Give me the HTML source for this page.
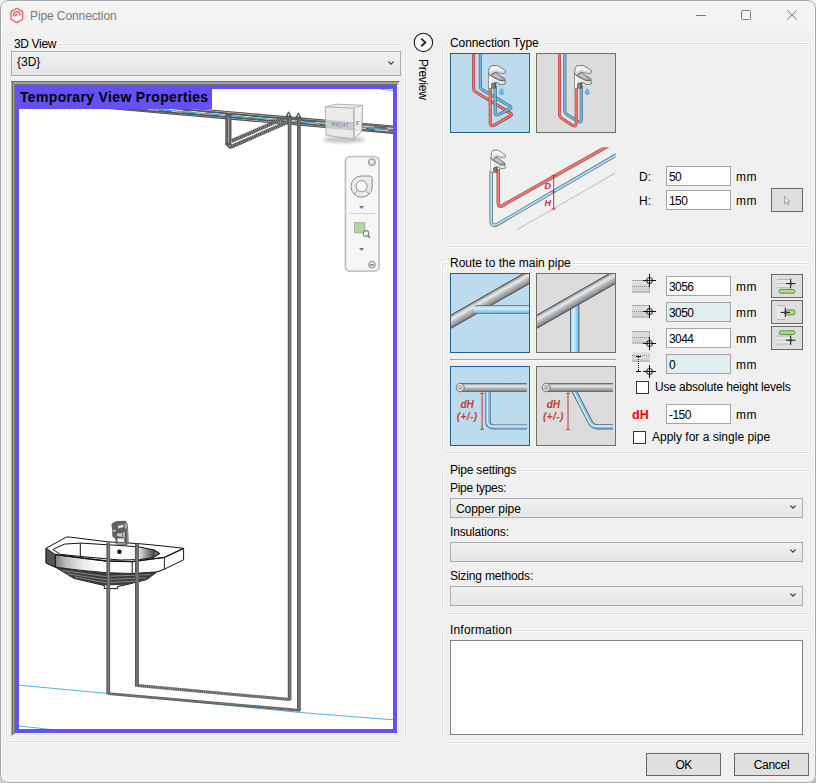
<!DOCTYPE html>
<html lang="en">
<head>
<meta charset="utf-8">
<title>Pipe Connection</title>
<style>
html,body{margin:0;padding:0;}
body{width:816px;height:783px;overflow:hidden;background:#f0f0f0;font-family:"Liberation Sans",sans-serif;font-size:12px;line-height:14px;color:#000;}
#win{position:absolute;left:0;top:0;width:816px;height:783px;border-radius:8px;background:#f0f0f0;overflow:hidden;}
#frame{position:absolute;left:0;top:0;width:814px;height:781px;border:1px solid #a8a8a8;border-radius:8px;pointer-events:none;box-shadow:inset 0 0 0 1px rgba(255,255,255,0.45);}
#tbar{position:absolute;left:0;top:0;width:816px;height:31px;background:#f3f3f3;}
.abs{position:absolute;}
.t{position:absolute;white-space:nowrap;line-height:14px;height:14px;}
.grp{position:absolute;box-sizing:border-box;border:1px solid #d3dde4;border-radius:4px;box-shadow:0 0 0 1px #fcfcfc, inset 0 0 0 1px #fcfcfc;}
.glab{position:absolute;white-space:nowrap;line-height:14px;height:14px;background:#f0f0f0;padding:0 2px 0 2px;}
.glab.r{padding-left:2px;}
.combo{position:absolute;box-sizing:border-box;border:1px solid #acacac;background:linear-gradient(#f1f1f1,#e5e5e5);}
.combo svg{position:absolute;right:6px;top:50%;margin-top:-3px;}
.inp{position:absolute;box-sizing:border-box;width:65px;height:20px;border:1px solid #a4a4ac;background:#fff;}
.inp.ro{background:#e1eef0;}
.inp span{position:absolute;left:2px;top:2.5px;line-height:14px;white-space:nowrap;letter-spacing:-0.55px;}
.btn{position:absolute;box-sizing:border-box;border:1px solid #696969;background:#dfdfdf;}
.ibtn{position:absolute;box-sizing:border-box;width:80px;height:80px;border:1px solid #6f6f6f;background:#dcdcdc;overflow:hidden;}
.ibtn.sel{border-color:#26608f;background:#bcdcee;}
.ibtn svg{position:absolute;left:-1px;top:-1px;}
.chk{position:absolute;box-sizing:border-box;width:13px;height:13px;border:1px solid #333;background:#fff;}
</style>
</head>
<body>
<div class="abs" style="left:0;top:773px;width:10px;height:10px;background:#cfcfcf"></div>
<div class="abs" style="left:806px;top:773px;width:10px;height:10px;background:#b8b8b8"></div>
<div id="win">
<div id="tbar"></div>
<!--TITLE-->
<svg class="abs" style="left:8px;top:6px" width="18" height="19" viewBox="8 6 18 19">
<path d="M16.8 8.2 L22.6 11.6 L22.6 19.2 L16.8 22.6 L11 19.2 L11 11.6 Z" fill="#f7fbfb" stroke="#f2555f" stroke-width="1.3" stroke-linejoin="round"/>
<path d="M13.7 16.6 L13.7 14.4 Q13.9 11.6 16.9 11.6 Q20 11.6 20.2 15.4" fill="none" stroke="#f2555f" stroke-width="1.4"/>
<path d="M15.5 16.2 L16.6 13.9" fill="none" stroke="#f2555f" stroke-width="1.5"/>
</svg>
<div class="t" style="left:30px;top:9px;color:#7a7a7a;letter-spacing:-0.1px">Pipe Connection</div>
<svg class="abs" style="left:690px;top:5px" width="115" height="21" viewBox="690 5 115 21" fill="none" stroke="#7c7c7c" stroke-width="1">
<path d="M696 15.5 H706"/>
<rect x="741.5" y="10.5" width="9" height="9" rx="1"/>
<path d="M787.3 10.3 L796.7 19.7 M796.7 10.3 L787.3 19.7"/>
</svg>
<!--LEFT-->
<div class="grp" style="left:6px;top:44px;width:400px;height:698px"></div>
<div class="glab" style="left:12px;top:37px;letter-spacing:-0.35px">3D View</div>
<div class="combo" style="left:11px;top:51px;width:390px;height:25px"><div class="t" style="left:5px;top:3px">{3D}</div>
<svg width="6" height="4" viewBox="0 0 6 4"><path d="M0.4 0.5 L3 3.1 L5.6 0.5" fill="none" stroke="#444" stroke-width="1.15"/></svg></div>
<div class="abs" id="vp" style="left:11px;top:81px;width:389px;height:655px;background:#e8e8e8">
<div class="abs" style="left:0;top:0;width:389px;height:655px;box-sizing:border-box;border-style:solid;border-width:1px;border-color:#6c6c6c #f8f8f8 #f8f8f8 #6c6c6c"></div>
<div class="abs" style="left:1px;top:1px;width:387px;height:653px;box-sizing:border-box;border-style:solid;border-width:2px 1px 1px 2px;border-color:#a2a2a2 #e4e4e4 #e4e4e4 #a2a2a2"></div>
<div class="abs" style="left:3px;top:3px;width:384px;height:650px;box-sizing:border-box;border-style:solid;border-width:1px;border-color:#747474 #fbfbfb #fbfbfb #747474"></div>
<div class="abs" style="left:0;top:1px;width:1px;height:653px;background:#adadad"></div>
<div class="abs" style="left:1px;top:1px;width:1px;height:653px;background:#6a6a6a"></div>
<div class="abs" style="left:2px;top:2px;width:1px;height:651px;background:#a6a6a6"></div>
<div class="abs" style="left:3px;top:3px;width:1px;height:650px;background:#77776f"></div>
<div class="abs" style="left:4px;top:4px;width:382px;height:648px;background:#6350f8"></div>
<div class="abs" id="scene" style="left:8px;top:8px;width:374px;height:640px;background:#fff;overflow:hidden">
<svg class="abs" style="left:0;top:0" width="374" height="640" viewBox="19 89 374 640">
<defs>
<linearGradient id="band" x1="55" y1="0" x2="165" y2="0" gradientUnits="userSpaceOnUse"><stop offset="0" stop-color="#7c7c7c"/><stop offset="0.1" stop-color="#bdbdbd"/><stop offset="0.26" stop-color="#ececec"/><stop offset="0.42" stop-color="#ffffff"/><stop offset="1" stop-color="#ffffff"/></linearGradient>
<linearGradient id="basin" x1="128" y1="0" x2="154" y2="0" gradientUnits="userSpaceOnUse"><stop offset="0" stop-color="#ffffff"/><stop offset="0.4" stop-color="#e8e8e8"/><stop offset="0.75" stop-color="#8a8a8a"/><stop offset="1" stop-color="#4a4a4a"/></linearGradient>
<linearGradient id="vpg" x1="0" y1="0" x2="1" y2="0"><stop offset="0" stop-color="#4c4c4c"/><stop offset="0.55" stop-color="#7e7e7e"/><stop offset="1" stop-color="#525252"/></linearGradient>
<filter id="blur1" x="-20%" y="-50%" width="140%" height="200%"><feGaussianBlur stdDeviation="1.6"/></filter>
</defs>
<!-- floor lines -->
<path d="M19 685.2 L107 693.4 L299.3 712.4 L393 719.8" stroke="#3fa9d6" stroke-width="0.9" fill="none"/>
<path d="M19 726 L52 729.6" stroke="#3fa9d6" stroke-width="0.9" fill="none"/>
<path d="M380 89 L393 90.6" stroke="#55c3e6" stroke-width="1" fill="none"/>
<!-- main pipe -->
<g fill="none">
<path d="M100 104.08 L393 129.71" stroke="#bdbdbd" stroke-width="7.8"/>
<path d="M100 100.38 L393 126.01" stroke="#585858" stroke-width="1.15"/>
<path d="M100 107.78 L393 133.41" stroke="#585858" stroke-width="1.15"/>
<path d="M100 101.88 L393 128.51" stroke="#585858" stroke-width="1.15"/>
<path d="M100 106.28 L393 130.91" stroke="#585858" stroke-width="1.15"/>
<path d="M100 103.17 L393 127.11" stroke="#585858" stroke-width="1.15"/>
<path d="M100 104.98 L393 132.31" stroke="#585858" stroke-width="1.15"/>
<path d="M100 101.08 L393 129.51" stroke="#585858" stroke-width="1.15"/>
<path d="M100 107.08 L393 130.11" stroke="#585858" stroke-width="1.15"/>
<path d="M100 102.48 L393 131.31" stroke="#ffffff" stroke-width="0.8" stroke-dasharray="14 9"/>
<path d="M100 105.67 L393 128.51" stroke="#ffffff" stroke-width="0.8" stroke-dasharray="11 13"/>
<path d="M100 104.38 L393 130.01" stroke="#3ba4d8" stroke-width="1.0"/>
</g>
<!-- branch -->
<g fill="none">
<path d="M228.4 113 V145" stroke="#5c5c5c" stroke-width="6.2"/>
<path d="M228.5 117 V143" stroke="#a2a2a2" stroke-width="1.3"/>
<path d="M231.6 141 L284 118.4" stroke="#505050" stroke-width="3.7"/>
<path d="M231.6 141 L284 118.4" stroke="#b0b0b0" stroke-width="3.7" stroke-dasharray="0.6 1.5"/>
<path d="M230.6 147 L289.4 121.4" stroke="#505050" stroke-width="3.7"/>
<path d="M230.6 147 L289.4 121.4" stroke="#b0b0b0" stroke-width="3.7" stroke-dasharray="0.6 1.5"/>
<path d="M225.6 143 L230.6 148.6" stroke="#5c5c5c" stroke-width="2.2"/>
<path d="M284.6 118.6 L288.6 111.8 L292.4 118.8 Z M294.6 119.6 L298.4 112.8 L302.2 119.8 Z" fill="#5a5a5a" stroke="#5a5a5a" stroke-width="1" stroke-linejoin="round"/>
<circle cx="288.6" cy="114.9" r="0.8" fill="#fff"/><circle cx="298.4" cy="115.9" r="0.8" fill="#fff"/>
</g>
<!-- long verticals -->
<rect x="287.8" y="118" width="3.6" height="582" fill="url(#vpg)"/>
<rect x="297" y="119" width="3.8" height="592" fill="url(#vpg)"/>
<!-- bottom runs -->
<g fill="none">
<path d="M137.4 685.6 L290.4 699.6" stroke="#5e5e5e" stroke-width="3"/>
<path d="M137.4 685.6 L290.4 699.6" stroke="#a0a0a0" stroke-width="3" stroke-dasharray="0.7 1.5"/>
<path d="M108.4 693.6 L300 710.4" stroke="#5e5e5e" stroke-width="2.8"/>
<path d="M108.4 693.6 L300 710.4" stroke="#a8a8a8" stroke-width="0.9" stroke-dasharray="1 1.6"/>
</g>
<!-- sink -->
<g stroke-linejoin="round">
<path d="M46.1 548.2 L66.6 537 L71.7 537.3 L107.4 541.8 L138.3 543.6 L160.2 545.7 L183.6 548.3 L183.6 559.8 L164.4 569.2 L157 571.8 L146.7 579.6 L125.8 584.8 L117.6 586.4 L117.6 588.6 L104.3 588.6 L104.3 585.5 L73.7 578.3 L55.3 567.1 L46.1 563 Z" fill="#fff" stroke="#111" stroke-width="1"/>
<path d="M55.3 567.1 L73.7 578.3 L104.3 585.5 L125.8 584.8 L146.7 579.6 L157 571.8 L132 573.6 L106 572.6 L80 570.6 Z" fill="#3c3c3c"/>
<path d="M62 570.6 L105 576.4 L150 574.6 M67 573.8 L105 579.6 L146 577.8 M75 577 L105 582.6 L138 581" stroke="#9a9a9a" stroke-width="0.8" fill="none"/>
<path d="M55.3 554.6 Q80 558.4 106.4 561 L132.2 561.6 L164.4 557.4 L164.4 569.2 L157 571.8 L132.2 573.5 L106.4 572.7 Q78 570.4 55.3 567.1 Z" fill="url(#band)" stroke="#111" stroke-width="0.9"/>
<path d="M46.1 548.2 L55.3 554.6 L55.3 567.1 L46.1 563 Z" fill="#565656" stroke="#111" stroke-width="0.9"/>
<path d="M132.2 561.6 V573.4" stroke="#111" stroke-width="1" fill="none"/>
<path d="M118 545.4 L138.3 546.8 L154 549.9 L159.7 553.5 L152.9 557.7 L139.4 559.4 L118 559.8 Z" fill="url(#basin)"/>
<path d="M154.2 550 L159.8 553.5 L153.4 557.6 Z" fill="#6a6a6a" stroke="#222" stroke-width="0.6"/>
<path d="M52.8 549.4 L64.5 544.1 L80.9 543.1 L120 545.5 L138.3 546.8 L154 549.9 L159.7 553.5 L152.9 557.7 L139.4 559.6 L120 560 L79.8 556.4 L60.4 554.3 Z" fill="none" stroke="#111" stroke-width="1"/>
<path d="M80.3 543.4 V556.2" stroke="#111" stroke-width="1" fill="none"/>
<path d="M55.3 554.6 L80 557.6 L106.4 561 L132.2 561.6 L164.4 557.4 L183.6 548.3" fill="none" stroke="#111" stroke-width="1.3"/>
<circle cx="119.4" cy="551.7" r="2.2" fill="#111"/>
</g>
<!-- faucet -->
<g>
<path d="M111.4 524.4 L113 522.4 L116.8 521 L125.6 520.7 L127.6 524 L128.2 530 L128.6 543 L126.8 545 L115.6 544.6 L115.4 539 L112.4 536.6 L112 529 Z" fill="#606060"/>
<path d="M118 525.8 L123.4 524.4 L123.7 527 L118.2 528.4 Z" fill="#d6d6d6"/>
<path d="M124.6 523.8 L126.4 523.4 L127.1 528.4 L125.2 528.7 Z" fill="#b9b9b9"/>
<path d="M112.7 530 L115.6 529.8 L115.6 531.3 L112.7 531.5 Z" fill="#dedede"/>
<path d="M117 533.6 L122.4 533 L122.4 536.9 L117 536.1 Z" fill="#c6c6c6"/>
<path d="M117.4 538.6 L124.2 538.4 L124.2 541.9 L117.4 541.7 Z" fill="#f1f1f1"/>
<path d="M123.3 532 L124.5 532 L124.7 537.8 L123.4 537.8 Z" fill="#d8d8d8"/>
<path d="M116.6 542.8 L126 543 L126 544.2 L116.6 544 Z" fill="#9c9c9c"/>
<path d="M126.8 526 L128 531 L128.3 542 L127 543 Z" fill="#8e8e8e"/>
</g>
<!-- sink pipes in front -->
<rect x="106.4" y="542.4" width="3.7" height="152" fill="url(#vpg)"/>
<rect x="135" y="543.6" width="3.9" height="143" fill="url(#vpg)"/>
<!-- view cube -->
<g>
<ellipse cx="344" cy="139.6" rx="21" ry="3.4" fill="#000" opacity="0.22" filter="url(#blur1)"/>
<path d="M325.2 106.8 L336.4 104.2 L362.6 105.3 L361.7 131.2 L353.9 139.3 L326.1 135.2 Z" fill="#e6e6e6" fill-opacity="0.78" stroke="#a9a9a9" stroke-width="0.9" stroke-linejoin="round"/>
<path d="M353.9 108.2 L362.6 105.3 L361.7 131.2 L353.9 139.3 Z" fill="#f4f4f4" fill-opacity="0.7" stroke="#a9a9a9" stroke-width="0.8" stroke-linejoin="round"/>
<path d="M325.2 106.8 L353.9 108.2 L353.9 139.3" fill="none" stroke="#a9a9a9" stroke-width="0.9"/>
<text x="331" y="126" font-family="Liberation Sans, sans-serif" font-size="5.6" font-weight="bold" fill="#8c8c8c" letter-spacing="0.1" transform="rotate(4 331 126)">RIGHT</text>
<text x="356" y="124.6" font-family="Liberation Sans, sans-serif" font-size="5.6" font-weight="bold" fill="#8c8c8c">F</text>
</g>
<!-- nav bar -->
<g>
<rect x="345.4" y="156.6" width="33.6" height="114.6" rx="4.5" fill="#f6f6f6" stroke="#c4c4c4" stroke-width="1.8"/>
<circle cx="371.9" cy="162.2" r="3.6" fill="#b8b8b8" stroke="#9a9a9a" stroke-width="0.8"/>
<path d="M370.2 160.5 L373.6 163.9 M373.6 160.5 L370.2 163.9" stroke="#fff" stroke-width="1.1"/>
<path d="M361.6 176 L369.6 176 Q372.2 176 372.2 178.6 L372.2 186.5 A10.6 10.6 0 1 1 361.6 176 Z" fill="#ebebed" stroke="#8e8e8e" stroke-width="1"/>
<circle cx="361.6" cy="186.2" r="5.6" fill="#f8f8f8" stroke="#8e8e8e" stroke-width="1"/>
<path d="M357.6 190.2 L354.2 194 M365.6 190.2 L369 194" stroke="#8e8e8e" stroke-width="0.9"/>
<path d="M359 206 H364.2 L361.6 209 Z" fill="#7a7a7a"/>
<path d="M349.4 213.4 H375" stroke="#cdcdcd" stroke-width="1"/>
<rect x="354.4" y="222.6" width="10.4" height="10.2" fill="#b4d4a2" stroke="#94bd80" stroke-width="0.9"/>
<circle cx="366" cy="233.4" r="2.8" fill="#f4f6f8" stroke="#808080" stroke-width="1.1"/>
<path d="M368 235.6 L370 237.8" stroke="#707070" stroke-width="1.5"/>
<path d="M359 248 H364.2 L361.6 251 Z" fill="#7a7a7a"/>
<circle cx="371.9" cy="264.6" r="3.4" fill="#e6e6e6" stroke="#8e8e8e" stroke-width="1"/>
<path d="M369.6 264.9 H374.2" stroke="#8a8a8a" stroke-width="1.5"/>
</g>
</svg>
</div>
<div class="abs" style="left:4px;top:4px;width:197px;height:24px;background:#6350f8"></div>
<div class="t" style="left:9px;top:8px;font-weight:bold;font-size:14px;letter-spacing:0.34px;line-height:17px;height:17px">Temporary View Properties</div>
</div>
<!--PREVIEW-->
<svg class="abs" style="left:412px;top:31px" width="23" height="23" viewBox="412 31 23 23">
<circle cx="423.4" cy="42.4" r="9.2" fill="#fff" stroke="#1a1a1a" stroke-width="1.1"/>
<path d="M421.2 38.6 L425.3 42.4 L421.2 46.2" fill="none" stroke="#222" stroke-width="1.9"/>
</svg>
<div class="t" style="left:430px;top:59px;transform-origin:0 0;transform:rotate(90deg);letter-spacing:-0.3px">Preview</div>
<!--G1-->
<svg width="0" height="0" style="position:absolute"><defs>
<g id="fc">
<path d="M0.7 8.3 L2.2 10.6 L12.4 15.7 L17 15.5 L17.3 19 L11.4 19.6 L10.4 18 L8.3 17.5 L3.75 18.5 L3.5 23.4 L0.7 23.4 Z" fill="#e9e9e9" stroke="#3e3e3e" stroke-width="0.65" stroke-linejoin="round"/>
<path d="M0.9 9 L2.3 11 L4.4 12.1 L3 18.4 L3 23.2 L0.9 23.2 Z" fill="#f8f8f8"/>
<path d="M2.2 10.6 L3.75 9.3 L7.3 7.8 L17 13.7 L17 15.5 L12.4 15.7 Z" fill="#a3a3a3" stroke="#3e3e3e" stroke-width="0.5" stroke-linejoin="round"/>
<path d="M4.4 10.2 L7.2 8.6 L13 12.2 L11.6 14.6 Z" fill="#c4c4c4"/>
<path d="M0.7 8.3 L1.2 3.2 L3 0.7 L9.4 0.6 L17.5 5.5 L17.5 7.6 L16 8.3 L13.5 8.3 L7.3 7 L3.75 9.3 L2.2 10.6 Z" fill="#f4f4f4" stroke="#3e3e3e" stroke-width="0.65" stroke-linejoin="round"/>
<path d="M7.4 6.4 L13.6 7.7 L16.2 7.7 L17.1 7.2 L17.1 5.9 L13.4 6.4 L7.6 4.8 L3.2 6.6 L1.4 8.2 L2.4 9.8 L3.8 8.6 Z" fill="#d4d4d4"/>
<path d="M3.75 18.5 L8.3 17.5 L8.3 23.6 L3.5 23.4 Z" fill="#5c5c5c"/>
<path d="M4 19.6 L6.4 18.6 L6.2 23.4 L3.8 23.4 Z" fill="#858585"/>
</g>
<path id="drop" d="M0 -3.4 Q2.6 0.4 2.5 1.4 A2.5 2.5 0 0 1 -2.5 1.4 Q-2.6 0.4 0 -3.4 Z" fill="#6db4e2"/>
</defs></svg>
<div class="grp" style="left:442px;top:43px;width:369px;height:204px"></div>
<div class="glab r" style="left:448px;top:36px;letter-spacing:-0.08px">Connection Type</div>
<div class="ibtn sel" style="left:450px;top:53px"><svg width="80" height="80" viewBox="450 53 80 80">
<g fill="none" stroke-linejoin="round" stroke-linecap="butt">
<path d="M473.6 53 V88.6 Q473.6 90.6 475.4 91.7 L509.6 112.6 Q512.6 114.6 509.6 116.4 L505 119" stroke="#8e4545" stroke-width="3"/><path d="M473.6 53 V88.6 Q473.6 90.6 475.4 91.7 L509.6 112.6 Q512.6 114.6 509.6 116.4 L505 119" stroke="#f06e6a" stroke-width="2"/>
<path d="M480.4 53 V86.6 Q480.4 88.6 482.2 89.6 L509.2 105.8 Q512 107.6 509.2 109.2 L505 111.5" stroke="#3f627b" stroke-width="3"/><path d="M480.4 53 V86.6 Q480.4 88.6 482.2 89.6 L509.2 105.8 Q512 107.6 509.2 109.2 L505 111.5" stroke="#74b3da" stroke-width="2"/>
<path d="M511 113.6 Q512.4 114.8 509.6 116.4 L494.8 124.9 Q490.2 127.4 490.2 122.4 V87.6" stroke="#8e4545" stroke-width="3"/><path d="M511 113.6 Q512.4 114.8 509.6 116.4 L494.8 124.9 Q490.2 127.4 490.2 122.4 V87.6" stroke="#f06e6a" stroke-width="2"/>
<path d="M510.4 106.6 Q511.8 107.8 509.2 109.2 L499 114.4 Q495.2 116.2 495.2 112.2 V86.6" stroke="#3f627b" stroke-width="3"/><path d="M510.4 106.6 Q511.8 107.8 509.2 109.2 L499 114.4 Q495.2 116.2 495.2 112.2 V86.6" stroke="#74b3da" stroke-width="2"/>
</g>
<use href="#fc" x="488" y="65"/>
<use href="#drop" x="501.5" y="91"/>
</svg></div>
<div class="ibtn" style="left:536px;top:53px"><svg width="80" height="80" viewBox="536 53 80 80">
<g fill="none" stroke-linejoin="round">
<path d="M564.8 53 V110.6 Q564.8 113.4 567.2 114.8 L578 121.4 Q581.3 123.2 581.3 119.6 V86" stroke="#3f627b" stroke-width="3"/>
<path d="M564.8 53 V110.6 Q564.8 113.4 567.2 114.8 L578 121.4 Q581.3 123.2 581.3 119.6 V86" stroke="#74b3da" stroke-width="2"/>
<path d="M562.1 53 V113 Q562.1 116 564.6 117.4 L573.6 123 Q576 124.2 576 121" stroke="#ececec" stroke-width="1.2"/>
<path d="M559.5 53 V113.6 Q559.5 117 562.4 118.8 L572.4 125.2 Q576.2 127.4 576.2 123 V88" stroke="#8e4545" stroke-width="3"/>
<path d="M559.5 53 V113.6 Q559.5 117 562.4 118.8 L572.4 125.2 Q576.2 127.4 576.2 123 V88" stroke="#f06e6a" stroke-width="2"/>
</g>
<use href="#fc" x="574" y="65"/>
<use href="#drop" x="587.2" y="91.2"/>
</svg></div>
<svg class="abs" style="left:480px;top:140px" width="140" height="95" viewBox="480 140 140 95">
<defs><clipPath id="cpi"><rect x="480" y="147.4" width="135.4" height="90"/></clipPath></defs>
<g clip-path="url(#cpi)">
<path d="M517 229.7 L615 173.2" stroke="#b9bcc2" stroke-width="1" fill="none"/>
<g fill="none" stroke-linejoin="round">
<path d="M491.2 171 V220 Q491.2 227.6 497.6 224.2 L622.3 151.4" stroke="#456a82" stroke-width="3.4"/>
<path d="M491.2 171 V220 Q491.2 227.6 497.6 224.2 L622.3 151.4" stroke="#b5dbf0" stroke-width="2"/>
<path d="M498.2 169 V202.6 Q498.2 208 503 205.2 L614.5 142.4" stroke="#9c4444" stroke-width="3.4"/>
<path d="M498.2 169 V202.6 Q498.2 208 503 205.2 L614.5 142.4" stroke="#f27a76" stroke-width="2"/>
</g>
</g>
<use href="#fc" x="0" y="0" transform="translate(490.4 149.6) scale(0.86 0.98)"/>
<path d="M553.7 175.4 V209 M551.6 175.4 H555.8 M551.6 192 H555.8 M551.6 209 H555.8" stroke="#c8322d" stroke-width="1" fill="none"/>
<text x="544.6" y="188.6" font-family="Liberation Sans, sans-serif" font-size="9" font-weight="bold" font-style="italic" fill="#c8322d">D</text>
<text x="544.6" y="205.6" font-family="Liberation Sans, sans-serif" font-size="9" font-weight="bold" font-style="italic" fill="#c8322d">H</text>
</svg>
<div class="t" style="left:639px;top:170px">D:</div>
<div class="t" style="left:639px;top:194px">H:</div>
<div class="inp" style="left:666px;top:166px"><span>50</span></div>
<div class="inp" style="left:666px;top:190px"><span>150</span></div>
<div class="t" style="left:736px;top:170px;letter-spacing:0.5px">mm</div>
<div class="t" style="left:736px;top:194px;letter-spacing:0.5px">mm</div>
<div class="btn" style="left:771px;top:188px;width:32px;height:24px"><svg class="abs" style="left:11px;top:6px" width="10" height="12" viewBox="0 0 10 12"><path d="M1.5 1 L1.5 8.6 L3.4 7 L4.8 10 L5.9 9.5 L4.6 6.6 L7 6.4 Z" fill="#f4f4f4" stroke="#9c9c9c" stroke-width="0.9" stroke-linejoin="round"/></svg></div>
<!--G2-->
<svg width="0" height="0" style="position:absolute"><defs>
<linearGradient id="gp" x1="0" y1="0" x2="0" y2="1"><stop offset="0" stop-color="#464b50"/><stop offset="0.07" stop-color="#5a5f64"/><stop offset="0.12" stop-color="#a9acb0"/><stop offset="0.34" stop-color="#ececec"/><stop offset="0.6" stop-color="#b4b7ba"/><stop offset="0.88" stop-color="#8a8d91"/><stop offset="0.94" stop-color="#55595e"/><stop offset="1" stop-color="#43474c"/></linearGradient>
<linearGradient id="bp" x1="0" y1="0" x2="0" y2="1"><stop offset="0" stop-color="#4b6a80"/><stop offset="0.1" stop-color="#4f7088"/><stop offset="0.14" stop-color="#a4d6f0"/><stop offset="0.38" stop-color="#d8f1fb"/><stop offset="0.7" stop-color="#94cff0"/><stop offset="0.88" stop-color="#78b6da"/><stop offset="0.92" stop-color="#4f7088"/><stop offset="1" stop-color="#4b6a80"/></linearGradient>
<linearGradient id="bpv" x1="0" y1="0" x2="1" y2="0"><stop offset="0" stop-color="#4b6a80"/><stop offset="0.1" stop-color="#4f7088"/><stop offset="0.14" stop-color="#a4d6f0"/><stop offset="0.38" stop-color="#d8f1fb"/><stop offset="0.7" stop-color="#94cff0"/><stop offset="0.88" stop-color="#78b6da"/><stop offset="0.92" stop-color="#4f7088"/><stop offset="1" stop-color="#4b6a80"/></linearGradient>
<g id="mainpipe"><rect x="-10" y="-6.2" width="120" height="12.4" fill="url(#gp)" transform="translate(40 26.3) rotate(-29.7) translate(-50 0)"/></g>
<g id="hpipe">
<rect x="10" y="17.2" width="66.9" height="8.6" fill="url(#gp)"/>
<ellipse cx="10.2" cy="21.5" rx="4" ry="4.3" fill="#e2e2e2" stroke="#62666a" stroke-width="0.9"/>
<ellipse cx="10.2" cy="21.5" rx="2.1" ry="2.4" fill="#c9c9c9" stroke="#a2a2a2" stroke-width="0.6"/>
<path d="M9 21.2 H11.4 V22.8 H9 Z" fill="#b0b0b0"/>
</g>
<g id="dim"><path d="M0 0 V36 M-2 0 H2 M-2 36 H2" stroke="#c53a33" stroke-width="1" fill="none"/></g>
</defs></svg>
<div class="grp" style="left:442px;top:263px;width:369px;height:190px"></div>
<div class="glab r" style="left:448px;top:256px">Route to the main pipe</div>
<div class="ibtn sel" style="left:450px;top:273px"><svg width="80" height="80" viewBox="0 0 80 80">
<use href="#mainpipe"/>
<path d="M26.4 32.3 H80 V40.7 H26.4 Q23.5 40.7 23.5 36.5 Q23.5 32.3 26.4 32.3 Z" fill="url(#bp)"/>
</svg></div>
<div class="ibtn" style="left:536px;top:273px"><svg width="80" height="80" viewBox="0 0 80 80">
<rect x="34" y="30" width="9.4" height="50" fill="url(#bpv)"/>
<use href="#mainpipe"/>
</svg></div>
<div class="abs" style="left:450px;top:359px;width:166px;height:1px;background:#a0a0a0"></div>
<div class="abs" style="left:450px;top:360px;width:166px;height:1px;background:#fafafa"></div>
<div class="ibtn sel" style="left:450px;top:366px"><svg width="80" height="80" viewBox="0 0 80 80">
<g fill="none"><path d="M38 24 V55 Q38 61 44 61 H76.9" stroke="#44627a" stroke-width="5.2"/><path d="M38 24 V55 Q38 61 44 61 H76.9" stroke="#8cc4e6" stroke-width="3.6"/><path d="M37.3 24 V55.4 Q37.3 60.2 43 60.2 H76.9" stroke="#d9f0fb" stroke-width="1.3"/></g>
<use href="#hpipe"/>
<use href="#dim" x="32.1" y="27.3"/>
<text x="17.2" y="41.5" text-anchor="middle" font-family="Liberation Sans, sans-serif" font-size="10" font-weight="bold" font-style="italic" fill="#c53a33">dH</text><text x="17.2" y="53.5" text-anchor="middle" font-family="Liberation Sans, sans-serif" font-size="10" font-weight="bold" font-style="italic" fill="#c53a33" letter-spacing="0.45">(+/-)</text>
</svg></div>
<div class="ibtn" style="left:536px;top:366px"><svg width="80" height="80" viewBox="0 0 80 80">
<g fill="none"><path d="M36.6 22 L54.4 56.4 Q56.6 60.8 61.6 60.8 H76.9" stroke="#44627a" stroke-width="5.2"/><path d="M36.6 22 L54.4 56.4 Q56.6 60.8 61.6 60.8 H76.9" stroke="#8cc4e6" stroke-width="3.6"/><path d="M35.9 22 L53.7 56.8 Q56 60 61.4 60 H76.9" stroke="#d9f0fb" stroke-width="1.3"/></g>
<use href="#hpipe"/>
<use href="#dim" x="32" y="27.3"/>
<text x="17.4" y="41.5" text-anchor="middle" font-family="Liberation Sans, sans-serif" font-size="10" font-weight="bold" font-style="italic" fill="#c53a33">dH</text><text x="17.4" y="53.5" text-anchor="middle" font-family="Liberation Sans, sans-serif" font-size="10" font-weight="bold" font-style="italic" fill="#c53a33" letter-spacing="0.45">(+/-)</text>
</svg></div>
<div class="inp" style="left:666px;top:276px"><span>3056</span></div>
<div class="t" style="left:736px;top:280px;letter-spacing:0.5px">mm</div>
<div class="inp ro" style="left:666px;top:302px"><span>3050</span></div>
<div class="t" style="left:736px;top:306px;letter-spacing:0.5px">mm</div>
<div class="inp" style="left:666px;top:328px"><span>3044</span></div>
<div class="t" style="left:736px;top:332px;letter-spacing:0.5px">mm</div>
<div class="inp ro" style="left:666px;top:354px"><span>0</span></div>
<div class="t" style="left:736px;top:358px;letter-spacing:0.5px">mm</div>
<svg class="abs" style="left:630px;top:272px" width="30" height="106" viewBox="630 272 30 106">
<defs><linearGradient id="lg" x1="0" y1="0" x2="0" y2="1"><stop offset="0" stop-color="#e2e2e2"/><stop offset="1" stop-color="#cfcfcf"/></linearGradient></defs>
<g id="lv1"><rect x="632" y="280" width="18" height="12.5" fill="url(#lg)"/><path d="M632 280.5 H650 M632 292 H650" stroke="#a8a8a8" stroke-width="1" fill="none"/><path d="M649.5 280 V292.5" stroke="#b5b5b5" stroke-width="1" fill="none"/><path d="M632 286.5 H650" stroke="#8c8c8c" stroke-width="1" stroke-dasharray="1 1" fill="none"/></g>
<g id="ch1" fill="none" stroke="#111" stroke-width="1"><circle cx="649.5" cy="280.5" r="3"/><path d="M643 280.5 H656 M649.5 274 V287"/></g>
<use href="#lv1" y="25"/><use href="#ch1" y="31"/>
<use href="#lv1" y="51"/><use href="#ch1" y="63"/>
<rect x="632" y="352" width="18" height="9.6" fill="url(#lg)"/><path d="M632 361.1 H650" stroke="#a8a8a8" stroke-width="1" fill="none"/><path d="M632 355.5 H650" stroke="#8c8c8c" stroke-width="1" stroke-dasharray="1 1" fill="none"/>
<path d="M636 356.5 H641 M638.5 357 V371" stroke="#111" stroke-width="1" fill="none" stroke-dasharray="1 0"/>
<path d="M638.5 358 V370" stroke="#f0f0f0" stroke-width="1" stroke-dasharray="1 1" fill="none"/>
<path d="M636 371.5 H641" stroke="#111" stroke-width="1" fill="none"/>
<use href="#ch1" y="91"/>
</svg>
<div class="btn" style="left:771px;top:274px;width:32px;height:24px"><svg class="abs" style="left:0;top:0" width="30" height="22" viewBox="772 275 30 22">
<rect x="777" y="279" width="13.700000000000045" height="9.199999999999989" fill="#e8e8e8"/><path d="M777 279.5 H790.7 M777 287.7 H790.7" stroke="#b4b4b4" stroke-width="1"/><path d="M777 283.6 H790.7" stroke="#a8a8a8" stroke-width="1" stroke-dasharray="1.5 1"/><rect x="779.2" y="289.5" width="15.599999999999909" height="3.6999999999999886" rx="1.4" fill="#b5d78f" stroke="#4f9a3a" stroke-width="1"/><g fill="none" stroke="#111" stroke-width="1"><path d="M786.0 283.6 H795.4000000000001 M790.7 278.90000000000003 V288.3"/><circle cx="790.7" cy="283.6" r="1.5" fill="#444" stroke="none"/></g>
</svg></div>
<div class="btn" style="left:771px;top:300px;width:32px;height:24px"><svg class="abs" style="left:0;top:0" width="30" height="22" viewBox="772 301 30 22">
<rect x="777" y="305" width="8.299999999999955" height="15" fill="#e8e8e8"/><path d="M777 305.5 H785.3 M777 319.5 H785.3" stroke="#b4b4b4" stroke-width="1"/><rect x="786.2" y="309.9" width="8.599999999999909" height="5.0" rx="1.4" fill="#b5d78f" stroke="#4f9a3a" stroke-width="1"/><g fill="none" stroke="#111" stroke-width="1"><path d="M780.5999999999999 312.4 H790.0 M785.3 307.7 V317.09999999999997"/><circle cx="785.3" cy="312.4" r="1.5" fill="#444" stroke="none"/></g>
</svg></div>
<div class="btn" style="left:771px;top:326px;width:32px;height:24px"><svg class="abs" style="left:0;top:0" width="30" height="22" viewBox="772 327 30 22">
<rect x="779.2" y="330.8" width="15.599999999999909" height="3.599999999999966" rx="1.4" fill="#b5d78f" stroke="#4f9a3a" stroke-width="1"/><rect x="777" y="335.6" width="13.700000000000045" height="9.0" fill="#e8e8e8"/><path d="M777 336.1 H790.7 M777 344.1 H790.7" stroke="#b4b4b4" stroke-width="1"/><path d="M777 340.1 H790.7" stroke="#a8a8a8" stroke-width="1" stroke-dasharray="1.5 1"/><g fill="none" stroke="#111" stroke-width="1"><path d="M786.0 340.2 H795.4000000000001 M790.7 335.5 V344.9"/><circle cx="790.7" cy="340.2" r="1.5" fill="#444" stroke="none"/></g>
</svg></div>
<div class="chk" style="left:636px;top:381px"></div>
<div class="t" style="left:655px;top:380px;letter-spacing:-0.17px">Use absolute height levels</div>
<div class="t" style="left:632px;top:408px;font-weight:bold;color:#f00000;font-size:12.5px">dH</div>
<div class="inp" style="left:666px;top:404px"><span>-150</span></div>
<div class="t" style="left:736px;top:408px;letter-spacing:0.5px">mm</div>
<div class="chk" style="left:633px;top:431px"></div>
<div class="t" style="left:652px;top:430px">Apply for a single pipe</div>
<!--G3-->
<div class="grp" style="left:442px;top:470px;width:369px;height:144px"></div>
<div class="glab r" style="left:448px;top:463px;letter-spacing:-0.2px">Pipe settings</div>
<div class="t" style="left:450px;top:481px;letter-spacing:-0.28px">Pipe types:</div>
<div class="combo" style="left:450px;top:498px;width:353px;height:20px"><div class="t" style="left:5px;top:3px;letter-spacing:-0.05px">Copper pipe</div><svg width="6" height="4" viewBox="0 0 6 4"><path d="M0.4 0.5 L3 3.1 L5.6 0.5" fill="none" stroke="#444" stroke-width="1.15"/></svg></div>
<div class="t" style="left:450px;top:525px;letter-spacing:-0.15px">Insulations:</div>
<div class="combo" style="left:450px;top:542px;width:353px;height:20px"><svg width="6" height="4" viewBox="0 0 6 4"><path d="M0.4 0.5 L3 3.1 L5.6 0.5" fill="none" stroke="#444" stroke-width="1.15"/></svg></div>
<div class="t" style="left:450px;top:569px;letter-spacing:-0.15px">Sizing methods:</div>
<div class="combo" style="left:450px;top:586px;width:353px;height:20px"><svg width="6" height="4" viewBox="0 0 6 4"><path d="M0.4 0.5 L3 3.1 L5.6 0.5" fill="none" stroke="#444" stroke-width="1.15"/></svg></div>
<!--G4-->
<div class="grp" style="left:442px;top:630px;width:369px;height:113px"></div>
<div class="glab r" style="left:448px;top:623px;letter-spacing:0.18px">Information</div>
<div class="abs" style="left:450px;top:640px;width:353px;height:95px;box-sizing:border-box;border:1px solid #82828a;background:#fff"></div>
<!--BUTTONS-->
<div class="btn" style="left:646px;top:753px;width:75px;height:23px"><div class="t" style="left:0;width:73px;text-align:center;top:4px;letter-spacing:-0.6px">OK</div></div>
<div class="btn" style="left:734px;top:753px;width:75px;height:23px"><div class="t" style="left:0;width:73px;text-align:center;top:4px;letter-spacing:-0.3px">Cancel</div></div>
<div id="frame"></div>
</div>
</body>
</html>
